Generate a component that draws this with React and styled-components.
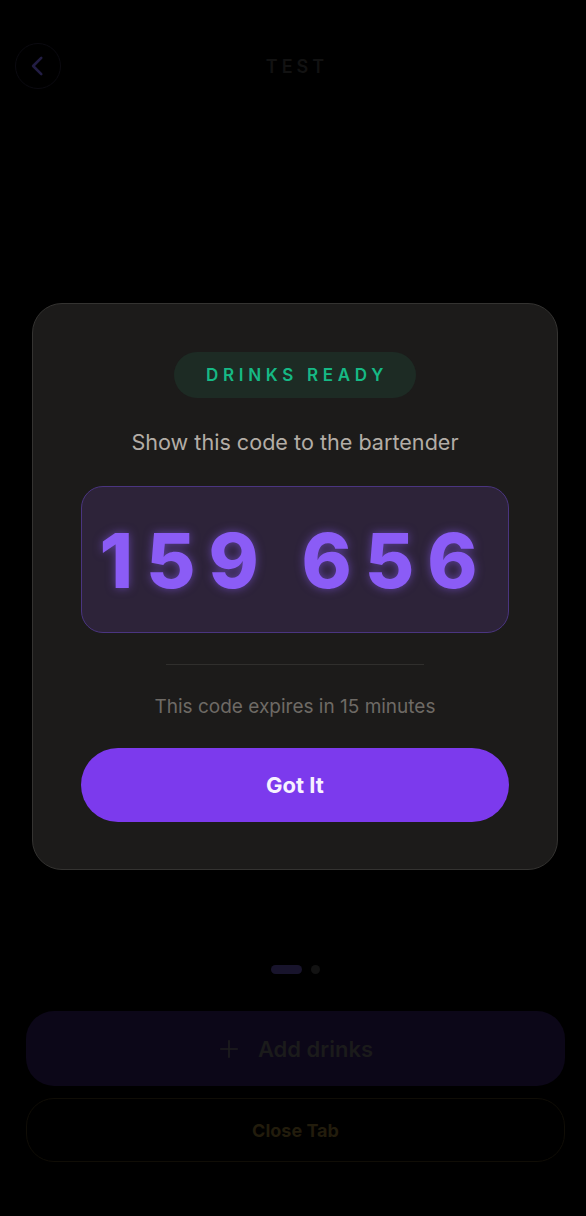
import React from "react";
import styled, { createGlobalStyle } from "styled-components";

const Global = createGlobalStyle`
  html, body { margin: 0; padding: 0; background: #000; overflow: hidden; }
  body { font-family: Inter, "Noto Sans", sans-serif; -webkit-font-smoothing: antialiased; }
  * { box-sizing: border-box; }
`;

const Page = styled.div`
  width: 590px;
  min-height: 1216px;
  display: flex;
  flex-direction: column;
  background: #000;
`;

const Header = styled.header`
  display: grid;
  grid-template-columns: 46px 1fr 46px;
  align-items: center;
  padding: 43px 15px 0 15px;
`;

const BackButton = styled.button`
  width: 46px;
  height: 46px;
  border-radius: 50%;
  border: 1.5px solid #0b0a10;
  background: transparent;
  display: flex;
  align-items: center;
  justify-content: center;
  padding: 0;
`;

const Title = styled.h1`
  margin: 0;
  text-align: center;
  font-size: 18px;
  font-weight: 600;
  letter-spacing: 4px;
  color: #121212;
  padding-left: 4px;
`;

const Spacer = styled.div`
  flex: 1;
`;

const Dots = styled.div`
  display: flex;
  justify-content: center;
  align-items: center;
  gap: 9px;
  margin-bottom: 37px;
`;

const Dot = styled.span`
  display: block;
  height: 9px;
  width: ${(p) => (p.$active ? "31px" : "9px")};
  border-radius: 5px;
  background: ${(p) => (p.$active ? "#18142c" : "#121212")};
`;

const Actions = styled.div`
  display: flex;
  flex-direction: column;
  gap: 12px;
  padding: 0 25px 54px 26px;
`;

const PrimaryButton = styled.button`
  height: 75px;
  border: none;
  border-radius: 28px;
  background: #0c0718;
  color: #1b1b1b;
  font-family: inherit;
  font-size: 22px;
  font-weight: 600;
  display: flex;
  align-items: center;
  justify-content: center;
  gap: 18px;
`;

const OutlineButton = styled.button`
  height: 64px;
  border: 1.5px solid #100d06;
  border-radius: 28px;
  background: transparent;
  color: #221c0c;
  font-family: inherit;
  font-size: 18px;
  font-weight: 700;
`;

const Overlay = styled.div`
  position: fixed;
  top: 0;
  left: 0;
  width: 590px;
  height: 1216px;
  display: flex;
  align-items: center;
  justify-content: center;
  padding-bottom: 43px;
`;

const Modal = styled.div`
  width: 526px;
  background: #1c1b1a;
  border: 1px solid #343331;
  border-radius: 30px;
  padding: 48px 48px 47px;
  display: flex;
  flex-direction: column;
  align-items: center;
`;

const Badge = styled.div`
  height: 46px;
  padding: 0 28px 0 32px;
  border-radius: 23px;
  background: #1d2b24;
  color: #16b985;
  font-size: 17px;
  font-weight: 600;
  letter-spacing: 4.7px;
  display: flex;
  align-items: center;
`;

const Prompt = styled.p`
  margin: 30px 0 0;
  font-size: 21.6px;
  line-height: 28px;
  color: #b3ada6;
`;

const CodeBox = styled.div`
  margin-top: 30px;
  width: 100%;
  height: 147px;
  border: 1.5px solid #4a3580;
  border-radius: 22px;
  background: #2d2339;
  display: flex;
  align-items: center;
  justify-content: center;
`;

const Code = styled.span`
  font-size: 76px;
  font-weight: 800;
  letter-spacing: 13px;
  color: #8b5cf6;
  line-height: 1;
  text-shadow: 0 0 10px rgba(139, 92, 246, 0.55);
`;

const Divider = styled.hr`
  margin: 31px 0 0;
  width: 258px;
  border: none;
  height: 1px;
  background: #302f2d;
`;

const Note = styled.p`
  margin: 30px 0 0;
  font-size: 19px;
  line-height: 24px;
  color: #6e6a65;
`;

const ConfirmButton = styled.button`
  margin-top: 29px;
  width: 100%;
  height: 74px;
  border: none;
  border-radius: 37px;
  background: #7c3aed;
  color: #f7f2ff;
  font-family: inherit;
  font-size: 22px;
  font-weight: 700;
`;

export default function App() {
  return (
    <>
      <Global />
      <Page>
        <Header>
          <BackButton aria-label="Back">
            <svg width="26" height="26" viewBox="0 0 24 24" fill="none" stroke="#221d44" strokeWidth="2.4" strokeLinecap="round" strokeLinejoin="round">
              <path d="M15 4.5l-7.5 7.5 7.5 7.5" />
            </svg>
          </BackButton>
          <Title>TEST</Title>
          <span />
        </Header>
        <Spacer />
        <Dots>
          <Dot $active />
          <Dot />
        </Dots>
        <Actions>
          <PrimaryButton>
            <svg width="22" height="22" viewBox="0 0 24 24" fill="none" stroke="#1e1e1e" strokeWidth="1.8" strokeLinecap="round">
              <path d="M12 3v18M3 12h18" />
            </svg>
            Add drinks
          </PrimaryButton>
          <OutlineButton>Close Tab</OutlineButton>
        </Actions>
      </Page>
      <Overlay>
        <Modal>
          <Badge>DRINKS READY</Badge>
          <Prompt>Show this code to the bartender</Prompt>
          <CodeBox>
            <Code>159 656</Code>
          </CodeBox>
          <Divider />
          <Note>This code expires in 15 minutes</Note>
          <ConfirmButton>Got It</ConfirmButton>
        </Modal>
      </Overlay>
    </>
  );
}
